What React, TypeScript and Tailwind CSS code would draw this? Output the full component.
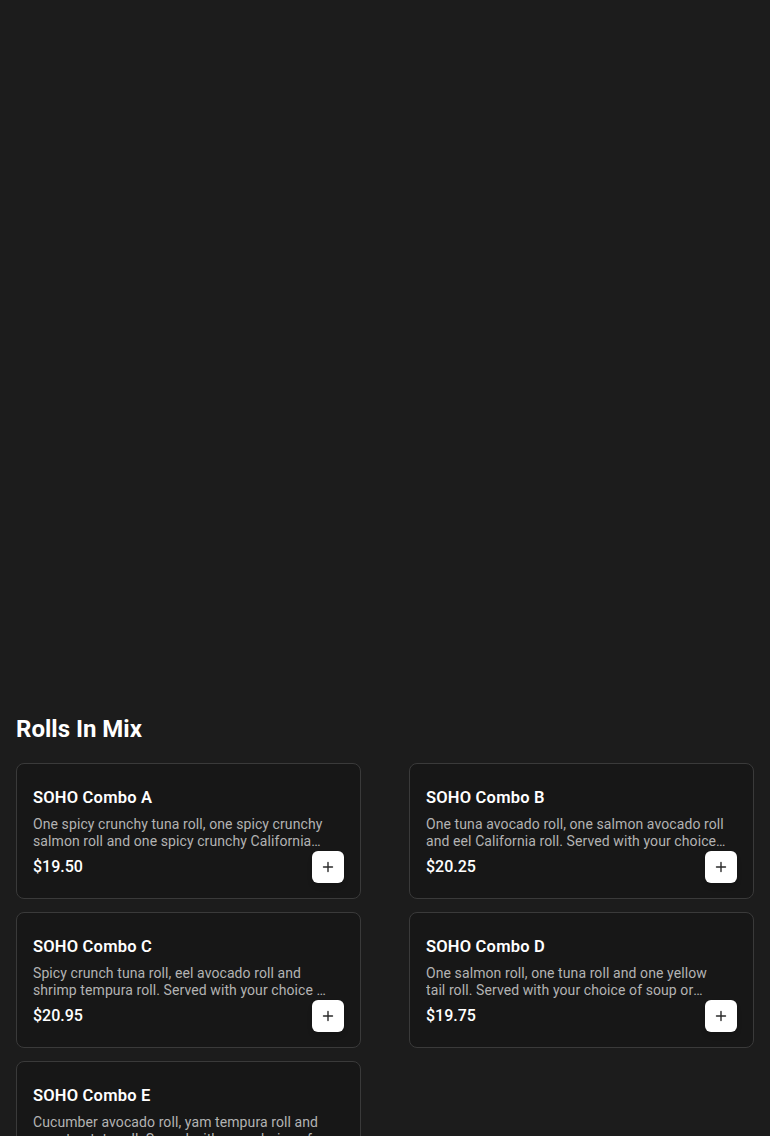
const items = [
  {
    name: "SOHO Combo A",
    desc: "One spicy crunchy tuna roll, one spicy crunchy salmon roll and one spicy crunchy California roll. Served with your choice of soup or salad.",
    price: "$19.50",
  },
  {
    name: "SOHO Combo B",
    desc: "One tuna avocado roll, one salmon avocado roll and eel California roll. Served with your choice of soup or salad.",
    price: "$20.25",
  },
  {
    name: "SOHO Combo C",
    desc: "Spicy crunch tuna roll, eel avocado roll and shrimp tempura roll. Served with your choice of soup or salad.",
    price: "$20.95",
  },
  {
    name: "SOHO Combo D",
    desc: "One salmon roll, one tuna roll and one yellow tail roll. Served with your choice of soup or salad.",
    price: "$19.75",
  },
  {
    name: "SOHO Combo E",
    desc: "Cucumber avocado roll, yam tempura roll and sweet potato roll. Served with your choice of soup or salad.",
    price: "$18.50",
  },
];

function PlusIcon() {
  return (
    <svg width="12" height="12" viewBox="0 0 12 12" fill="none">
      <path d="M6 1.5v9M1.5 6h9" stroke="#2a2a2a" strokeWidth="1.4" strokeLinecap="round" />
    </svg>
  );
}

export default function App() {
  return (
    <div className="min-h-screen bg-[#1c1c1c] font-['Roboto',sans-serif] text-white">
      <div className="h-[713px]" />
      <section className="px-4 pb-10">
        <h2 className="text-2xl font-bold leading-8 text-white">Rolls In Mix</h2>
        <div className="mt-[18px] grid grid-cols-2 gap-x-12 gap-y-[13px]">
          {items.map((item) => (
            <article
              key={item.name}
              className="flex flex-col rounded-lg border border-[#3a3a3a] bg-[#171717] px-4 pt-[22px] pb-[15px]"
            >
              <h3 className="text-[16.5px] font-semibold leading-6 tracking-[0.2px] text-white">{item.name}</h3>
              <p className="mt-[6px] line-clamp-2 pr-[10px] text-sm leading-[17px] tracking-[0.09px] text-[#b3b3b3]">
                {item.desc}
              </p>
              <div className="mt-px flex items-center justify-between">
                <span className="text-base font-medium text-white">{item.price}</span>
                <button className="flex h-8 w-8 items-center justify-center rounded-md bg-white shadow-md">
                  <PlusIcon />
                </button>
              </div>
            </article>
          ))}
        </div>
      </section>
    </div>
  );
}
